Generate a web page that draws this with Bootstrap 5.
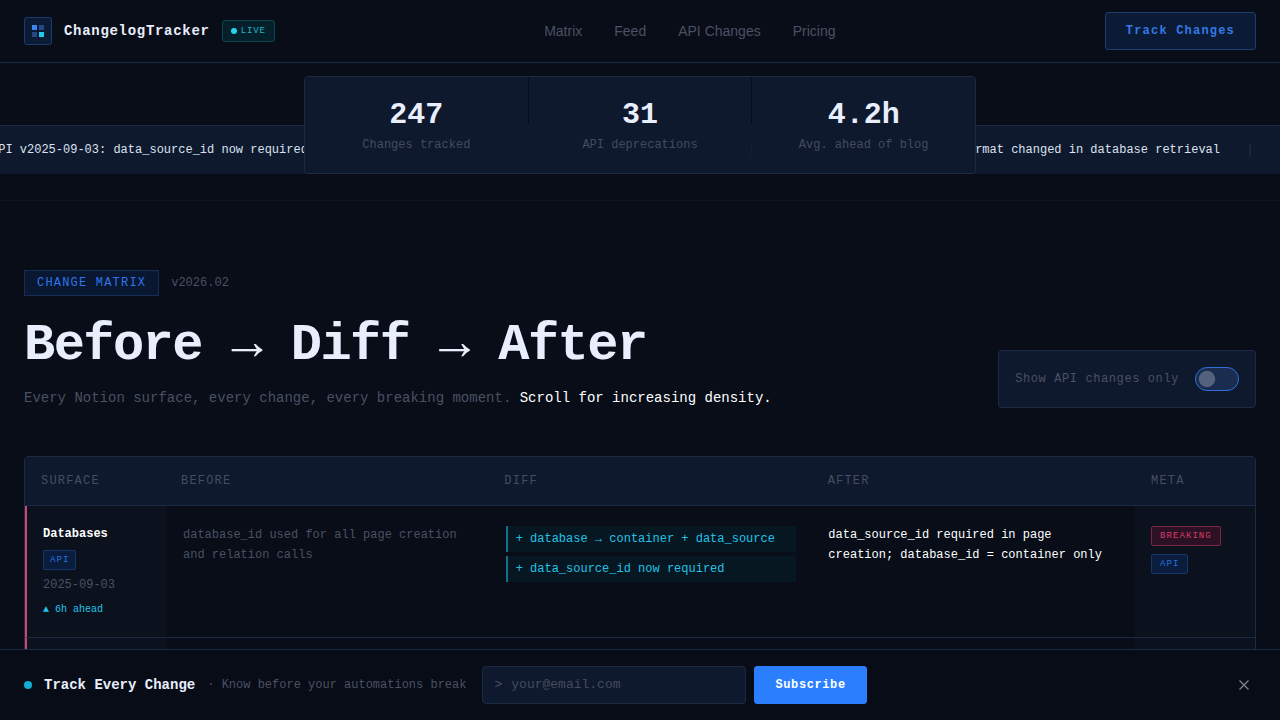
<!DOCTYPE html>
<html lang="en" data-bs-theme="dark">
<head>
<meta charset="utf-8">
<meta name="viewport" content="width=device-width, initial-scale=1">
<title>ChangelogTracker</title>
<link rel="stylesheet" href="https://cdn.jsdelivr.net/npm/bootstrap@5.3.0/dist/css/bootstrap.min.css">
<style>
  :root {
    --ink: #080d18;
    --panel: #0e192d;
    --line: #1b2b43;
    --fg: #e8eefc;
    --dim: #4a5162;
    --blue: #2f7ff8;
    --cyan: #22c3e6;
    --rose: #e8436f;
  }
  body { background: var(--ink); color: var(--fg); font: 12px/16px "Liberation Mono", monospace; overflow-x: hidden; }
  .dim { color: var(--dim); }
  .panel { background: var(--panel); border: 1px solid var(--line); border-radius: 4px; }
  .gap-12 { gap: 12px; }

  /* header */
  .site-header { background: #090d17; border-bottom: 1px solid var(--line); padding: 12px 24px; }
  .logo-box { width: 28px; height: 28px; background: #0b1a35; border: 1px solid #1d3a6c; border-radius: 3px; }
  .brand-name { font-size: 14px; letter-spacing: .05em; color: var(--fg); }
  .live { height: 22px; padding: 0 8px; gap: 4px; font-size: 9px; letter-spacing: .1em; color: #25b5c8; background: #06202b; border: 1px solid #0b4652; border-radius: 3px; }
  .live-dot { width: 6px; height: 6px; background: #22d3ee; }
  .site-nav { gap: 32px; }
  .site-nav .nav-link { padding: 0; color: var(--dim); font: 14px/20px "Liberation Sans", sans-serif; }
  .btn-mono { height: 38px; padding: 0 20px; font-size: 12px; line-height: 16px; font-weight: 700; border-radius: 3px; }
  .btn-track, .btn-track:hover { letter-spacing: .1em; color: #3578e6; background: #0b1b35; border-color: #1a3d73; }
  .btn-subscribe, .btn-subscribe:hover { letter-spacing: .05em; color: #fff; background: #2b7fff; border-color: #2b7fff; }

  /* ticker with stats */
  .hero { padding: 62px 0 26px; border-bottom: 1px solid #10161f; }
  .ticker { height: 49px; background: var(--panel); border-top: 1px solid var(--line); color: #dbe2f0; }
  .ticker-track { margin-left: -9px; white-space: nowrap; }
  .tick-sep { display: inline-block; width: 8px; margin: 0 26px; text-align: center; color: #24344e; }
  .stats { width: 672px; max-width: 100%; height: 98px; display: grid; grid-template-columns: repeat(3, 1fr); gap: 1px; border: 1px solid var(--line); border-radius: 4px; overflow: hidden; }
  .stat { background: var(--panel); padding: 20px 16px; }
  .stat-num { font-size: 30px; line-height: 36px; font-weight: 700; }
  .stat-label { margin-top: 4px; color: #434c5d; }

  /* matrix heading */
  .matrix { padding: 69px 24px 120px; }
  .tag { padding: 4px 12px; letter-spacing: .1em; color: #2f74ea; background: #0a1730; border: 1px solid #152d57; }
  .title { margin: 16px 0 0; font-size: 52px; line-height: 68px; font-weight: 700; letter-spacing: -.03em; color: var(--fg); }
  .subtitle { margin: 8px 0 0; font-size: 14px; line-height: 20px; }
  .filter { padding: 16px; gap: 16px; letter-spacing: .05em; }
  .filter .form-check-input { width: 44px; height: 24px; margin: 0; background-color: #1a2c50; border: 1px solid #2f6fd6;
    --bs-form-switch-bg: url("data:image/svg+xml,%3csvg xmlns='http://www.w3.org/2000/svg' viewBox='-11 -11 22 22'%3e%3ccircle r='9.5' fill='%234d5568'/%3e%3c/svg%3e"); background-position: left center; box-shadow: none; }

  /* change table */
  .matrix-table { display: block; margin-top: 48px; background: transparent; border: 1px solid var(--line); border-radius: 4px; overflow: hidden; }
  .matrix-table thead, .matrix-table tbody { display: block; }
  .matrix-table tr { display: grid; grid-template-columns: 140px 1fr 1fr 1fr 120px; border-bottom: 1px solid var(--line); }
  .matrix-table thead tr { background: var(--panel); }
  .matrix-table th { padding: 16px; font-weight: 400; letter-spacing: .1em; color: #444e60; }
  .matrix-table tbody tr { border-left: 2px solid #cf476e; }
  .matrix-table td { padding: 20px 16px; }
  .matrix-table .prose-cell { padding-top: 19px; line-height: 20px; }
  .edge-cell { background: #0b121e; }
  .chip { display: block; width: fit-content; padding: 0 8px; font-size: 9px; line-height: 18px; letter-spacing: .12em; border: 1px solid; border-radius: 2px; }
  .chip-sm { padding: 0 6px; }
  .chip-api { color: #2a6fe0; background: #0b1d3d; border-color: #163767; }
  .chip-break { color: #d73c66; background: #2c1023; border-color: #7a2745; margin-bottom: 8px; }
  .when { margin-top: 6px; line-height: 18px; }
  .ahead { margin-top: 8px; font-size: 10px; line-height: 15px; color: var(--cyan); }
  .diff-line { padding: 2px 8px; line-height: 22px; color: var(--cyan); background: #071722; border-left: 2px solid #12708a; margin-bottom: 4px; }

  /* subscribe bar */
  .sub-bar { background: #080c17; border-top: 1px solid var(--line); padding: 16px 24px; }
  .pulse { width: 8px; height: 8px; background: #12aed8; }
  .sub-title { font-size: 14px; }
  .email-box { width: 264px; height: 38px; padding: 0 11px; font-size: 13px; gap: 9px; }
  .email-box .form-control { padding: 0; border: 0; background: transparent; box-shadow: none; font-size: 13px; color: var(--fg); border-radius: 0; }
  .email-box .form-control::placeholder { color: #434c5d; }
  .close-x { width: 24px; height: 24px; color: #7b8190; }
</style>
</head>
<body>

<header class="site-header d-flex align-items-center justify-content-between">
  <div class="d-flex align-items-center gap-12">
    <a href="#" class="d-flex align-items-center gap-12 text-decoration-none">
      <span class="logo-box d-flex align-items-center justify-content-center">
        <svg width="12" height="12" viewBox="0 0 12 12" aria-hidden="true">
          <rect width="5" height="5" fill="#3b82f6"/>
          <rect x="7" width="5" height="5" fill="#244a86"/>
          <rect y="7" width="5" height="5" fill="#244a86"/>
          <rect x="7" y="7" width="5" height="5" fill="#22c8ee"/>
        </svg>
      </span>
      <span class="brand-name fw-bold">ChangelogTracker</span>
    </a>
    <span class="live d-flex align-items-center"><span class="live-dot rounded-circle"></span>LIVE</span>
  </div>
  <nav class="site-nav d-none d-md-flex">
    <a class="nav-link" href="#matrix">Matrix</a>
    <a class="nav-link" href="#feed">Feed</a>
    <a class="nav-link" href="#api">API Changes</a>
    <a class="nav-link" href="#pricing">Pricing</a>
  </nav>
  <button type="button" class="btn btn-mono btn-track">Track Changes</button>
</header>

<section class="hero">
  <div class="position-relative">
    <div class="ticker d-flex align-items-center overflow-hidden">
      <div class="ticker-track">API v2025-09-03: data_source_id now required<span class="tick-sep">|</span>Databases: saved views now inherit parent schemas<span class="tick-sep">|</span>Rollup API: number value format changed in database retrieval<span class="tick-sep">|</span></div>
    </div>
    <div class="stats position-absolute bottom-0 start-50 translate-middle-x text-center">
      <div class="stat"><div class="stat-num">247</div><div class="stat-label">Changes tracked</div></div>
      <div class="stat"><div class="stat-num">31</div><div class="stat-label">API deprecations</div></div>
      <div class="stat"><div class="stat-num">4.2h</div><div class="stat-label">Avg. ahead of blog</div></div>
    </div>
  </div>
</section>

<main class="matrix" id="matrix">
  <div class="d-flex flex-wrap align-items-end justify-content-between">
    <div>
      <div class="d-flex align-items-center gap-12">
        <span class="tag">CHANGE MATRIX</span>
        <span class="dim">v2026.02</span>
      </div>
      <h1 class="title">Before → Diff → After</h1>
      <p class="subtitle dim">Every Notion surface, every change, every breaking moment. <span class="text-white">Scroll for increasing density.</span></p>
    </div>
    <div class="filter panel form-switch d-flex align-items-center">
      <label class="dim" for="apiOnly">Show API changes only</label>
      <input class="form-check-input" type="checkbox" role="switch" id="apiOnly">
    </div>
  </div>

  <table class="matrix-table">
    <thead>
      <tr><th scope="col">SURFACE</th><th scope="col">BEFORE</th><th scope="col">DIFF</th><th scope="col">AFTER</th><th scope="col">META</th></tr>
    </thead>
    <tbody>
      <tr>
        <td class="edge-cell">
          <div class="fw-bold text-white mb-2">Databases</div>
          <span class="chip chip-sm chip-api">API</span>
          <div class="when dim">2025-09-03</div>
          <div class="ahead">▲ 6h ahead</div>
        </td>
        <td class="prose-cell dim">database_id used for all page creation and relation calls</td>
        <td>
          <div class="diff-line">+ database → container + data_source</div>
          <div class="diff-line">+ data_source_id now required</div>
        </td>
        <td class="prose-cell text-white">data_source_id required in page creation; database_id = container only</td>
        <td class="edge-cell">
          <span class="chip chip-break">BREAKING</span>
          <span class="chip chip-api">API</span>
        </td>
      </tr>
      <tr>
        <td class="edge-cell"><div class="fw-bold text-white">Rollups</div></td>
        <td class="prose-cell dim">number value</td>
        <td><div class="diff-line">+ format changed</div></td>
        <td class="prose-cell text-white">typed value</td>
        <td class="edge-cell"><span class="chip chip-api">API</span></td>
      </tr>
    </tbody>
  </table>
</main>

<div class="sub-bar fixed-bottom d-flex align-items-center justify-content-between">
  <form class="d-flex align-items-center">
    <div class="d-flex align-items-center gap-12">
      <span class="pulse rounded-circle"></span>
      <span class="sub-title fw-bold">Track Every Change</span>
      <span class="dim">· Know before your automations break</span>
    </div>
    <div class="email-box panel d-flex align-items-center ms-3">
      <label class="dim" for="email">&gt;</label>
      <input class="form-control" type="email" id="email" placeholder="your@email.com">
    </div>
    <button type="submit" class="btn btn-mono btn-subscribe ms-2">Subscribe</button>
  </form>
  <button type="button" class="close-x btn p-0 border-0 d-flex align-items-center justify-content-center" aria-label="Close">
    <svg width="10" height="10" viewBox="0 0 10 10" fill="none" stroke="currentColor" stroke-width="1.4" aria-hidden="true"><path d="M.5.5l9 9M9.5.5l-9 9"/></svg>
  </button>
</div>

<script src="https://cdn.jsdelivr.net/npm/bootstrap@5.3.0/dist/js/bootstrap.bundle.min.js"></script>
</body>
</html>
